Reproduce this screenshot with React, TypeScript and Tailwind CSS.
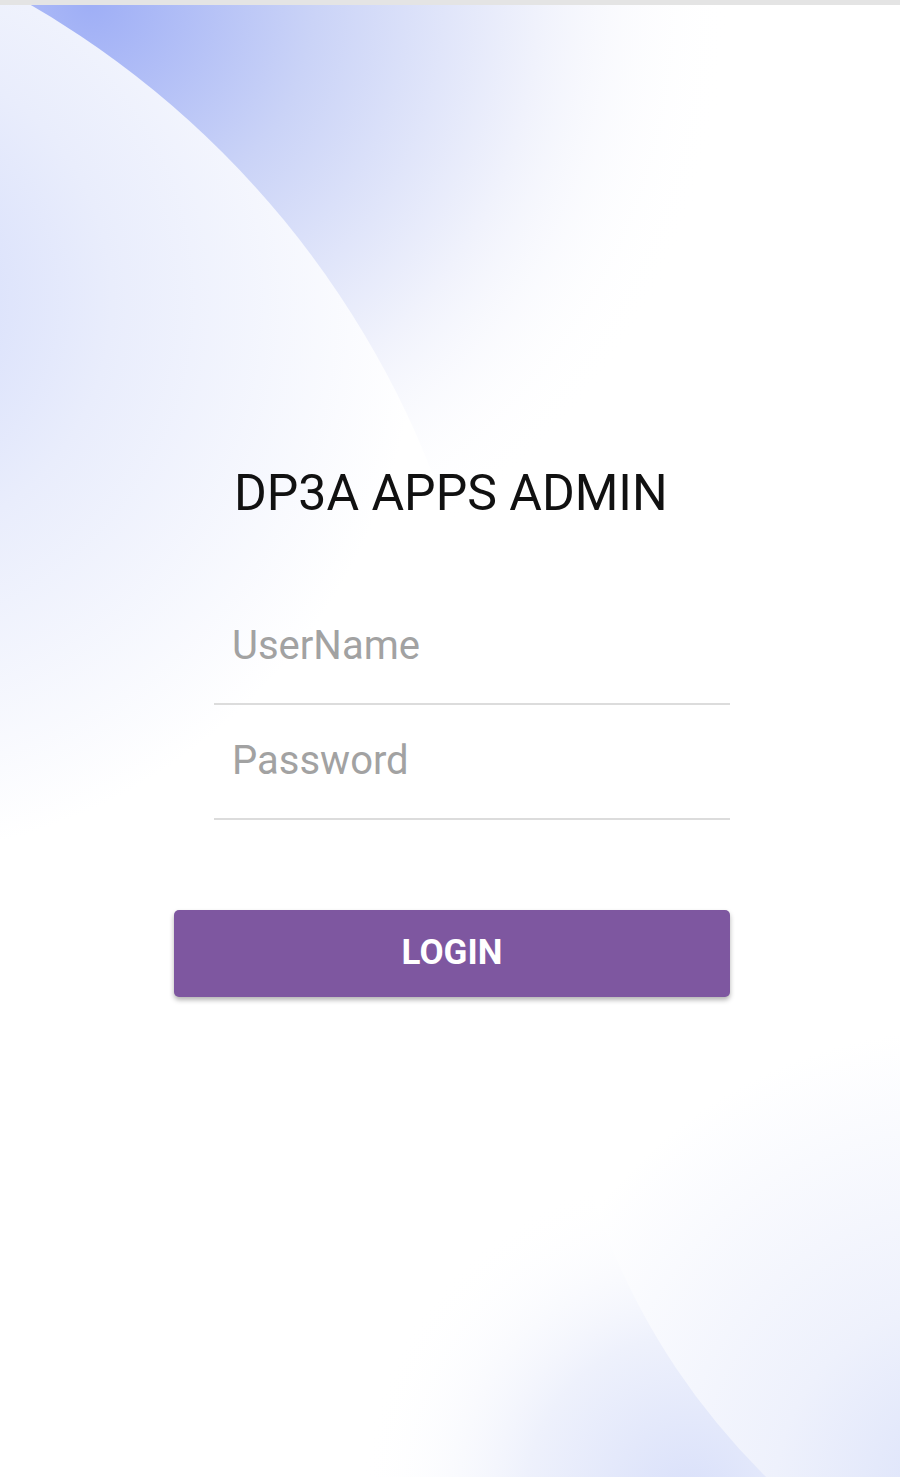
import { useState } from "react";

const Backdrop = () => {
  return (
    <svg
      className="absolute inset-0 h-full w-full"
      viewBox="0 0 900 1477"
      preserveAspectRatio="none"
    >
      <defs>
        <radialGradient id="topBand" gradientUnits="userSpaceOnUse" cx="90" cy="0" r="640">
          <stop offset="0" stopColor="#9eaef6" />
          <stop offset="0.35" stopColor="#cad3f7" />
          <stop offset="0.7" stopColor="#f0f2fc" />
          <stop offset="1" stopColor="#ffffff" stopOpacity="0" />
        </radialGradient>
        <radialGradient id="topInner" gradientUnits="userSpaceOnUse" cx="-140" cy="300" r="560">
          <stop offset="0" stopColor="#d0d9fb" />
          <stop offset="0.45" stopColor="#e9edfc" />
          <stop offset="1" stopColor="#ffffff" />
        </radialGradient>
        <radialGradient id="bottomBand" gradientUnits="userSpaceOnUse" cx="690" cy="1500" r="330">
          <stop offset="0" stopColor="#d9e0fa" />
          <stop offset="0.5" stopColor="#eef1fc" />
          <stop offset="1" stopColor="#ffffff" stopOpacity="0" />
        </radialGradient>
        <radialGradient id="bottomInner" gradientUnits="userSpaceOnUse" cx="960" cy="1490" r="460">
          <stop offset="0" stopColor="#dbe2fa" />
          <stop offset="0.4" stopColor="#eef1fc" />
          <stop offset="1" stopColor="#ffffff" />
        </radialGradient>
      </defs>
      <rect width="900" height="1477" fill="#ffffff" />
      <rect width="900" height="800" fill="url(#topBand)" />
      <circle cx="-440" cy="815" r="937" fill="url(#topInner)" />
      <rect y="1000" width="900" height="477" fill="url(#bottomBand)" />
      <circle cx="1258" cy="979" r="700" fill="url(#bottomInner)" />
    </svg>
  );
};

const Field = ({ placeholder, type }: { placeholder: string; type: string }) => {
  const [value, setValue] = useState("");
  return (
    <div className="border-b-2 border-[#dcdcdc] pt-[37px] pb-[39px]">
      <input
        type={type}
        value={value}
        onChange={(e) => setValue(e.target.value)}
        placeholder={placeholder}
        className="block h-[37px] w-full bg-transparent p-0 pl-[18px] text-[40px] leading-[37px] text-[#222] outline-none placeholder:text-[#a2a2a2]"
      />
    </div>
  );
};

export default function App() {
  return (
    <div className="relative h-[1477px] w-full overflow-hidden bg-white font-['Roboto',sans-serif]">
      <Backdrop />
      <div className="relative">
        <div className="h-[5px] w-full bg-[#e4e4e4]" />
        <form
          className="ml-[174px] w-[556px] pt-[463px]"
          onSubmit={(e) => e.preventDefault()}
        >
          <h1 className="pl-[60px] text-[50px] leading-[50px] font-normal text-[#111]">
            DP3A APPS ADMIN
          </h1>
          <div className="mt-[72px] ml-10">
            <Field placeholder="UserName" type="text" />
            <Field placeholder="Password" type="password" />
          </div>
          <button
            type="submit"
            className="mt-[90px] flex h-[87px] w-full items-center justify-center rounded-[5px] bg-[#7e57a0] text-[35px] font-bold text-white shadow-[0_3px_5px_rgba(0,0,0,0.3)]"
          >
            LOGIN
          </button>
        </form>
      </div>
    </div>
  );
}
